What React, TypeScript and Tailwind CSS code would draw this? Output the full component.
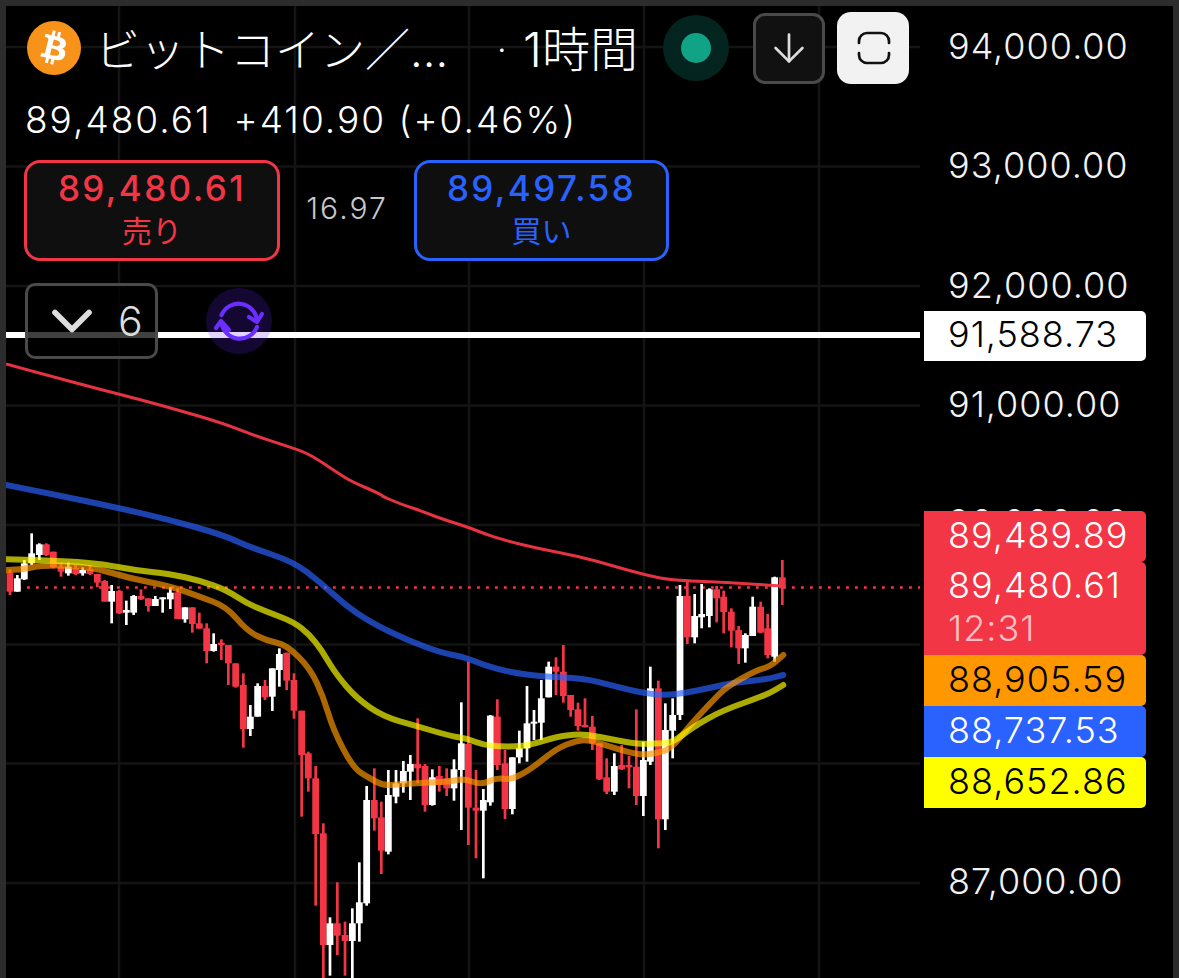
import { ArrowDown, ChevronDown } from "lucide-react"

type Candle = [number, number, number, number, number, 0 | 1]
type Pt = [number, number]

// candle rows: x, wick top, body top, body bottom, wick bottom, red?
// measured on 3x crops, so every group keeps its own origin
const left: Candle[] = [
  [30, 178, 188, 245, 255, 1], [52, 195, 205, 245, 245, 0], [73, 150, 160, 208, 210, 0], [95, 70, 130, 160, 165, 0],
  [118, 100, 103, 135, 150, 0], [139, 100, 103, 135, 138, 1], [160, 125, 125, 172, 175, 1], [183, 158, 170, 185, 200, 1],
  [205, 158, 170, 190, 197, 0], [227, 165, 175, 192, 195, 1], [248, 172, 180, 190, 197, 0], [270, 165, 178, 192, 195, 1],
  [292, 192, 192, 218, 232, 1], [314, 210, 213, 275, 275, 1], [335, 225, 243, 275, 340, 0], [358, 240, 243, 310, 312, 1],
  [379, 272, 300, 308, 345, 0], [401, 255, 258, 308, 315, 0], [423, 238, 258, 268, 270, 1], [445, 265, 265, 288, 305, 1],
  [466, 258, 267, 288, 288, 0], [488, 262, 262, 268, 308, 0], [511, 232, 248, 268, 297, 0], [533, 235, 247, 327, 327, 1],
  [555, 292, 292, 328, 338, 0], [577, 292, 292, 342, 368, 1], [598, 308, 340, 356, 356, 1], [620, 340, 355, 423, 460, 1],
  [641, 370, 402, 423, 425, 0], [664, 388, 398, 405, 450, 1], [685, 405, 405, 460, 525, 1], [707, 460, 460, 530, 533, 1],
  [730, 490, 525, 657, 713, 1], [751, 585, 620, 657, 678, 0], [773, 520, 528, 620, 620, 0], [795, 510, 528, 562, 570, 1],
  [817, 475, 475, 560, 603, 0], [838, 415, 432, 480, 530, 0], [860, 428, 428, 512, 540, 1],
]

const middle: Candle[] = [
  [12, 100, 120, 212, 236, 1], [35, 212, 212, 345, 530, 1], [55, 335, 340, 415, 455, 1], [77, 378, 415, 582, 797, 1],
  [100, 550, 580, 915, 1014, 1], [120, 832, 850, 915, 1007, 0], [142, 727, 850, 887, 945, 1], [165, 845, 885, 903, 1007, 1],
  [187, 805, 850, 903, 1014, 0], [208, 667, 787, 850, 905, 0], [230, 438, 480, 790, 797, 0], [253, 385, 480, 535, 572, 1],
  [274, 485, 532, 632, 702, 1], [295, 390, 465, 635, 643, 0], [318, 390, 430, 470, 490, 0], [340, 363, 393, 430, 458, 0],
  [361, 345, 372, 395, 480, 0], [383, 235, 372, 385, 430, 1], [405, 372, 378, 495, 515, 1], [427, 388, 412, 495, 497, 0],
  [448, 378, 408, 435, 455, 1], [470, 385, 415, 445, 468, 1], [492, 358, 388, 445, 482, 0], [514, 187, 310, 390, 570, 0],
  [535, 65, 312, 503, 615, 1], [558, 390, 503, 512, 655, 1], [580, 447, 480, 512, 715, 0], [601, 225, 227, 487, 497, 0],
  [622, 178, 230, 375, 390, 1], [645, 330, 370, 507, 537, 1], [667, 352, 352, 507, 523, 0], [688, 272, 325, 352, 370, 0],
  [711, 138, 250, 325, 365, 0], [732, 210, 245, 250, 300, 0], [754, 120, 175, 248, 300, 0], [776, 65, 80, 172, 172, 0],
  [798, 52, 80, 95, 165, 1], [820, 15, 95, 168, 188, 1], [842, 165, 165, 210, 230, 1], [864, 188, 208, 258, 272, 1],
  [885, 175, 255, 262, 262, 1],
]

const right: Candle[] = [
  [7, 528, 560, 610, 630, 1], [28, 610, 610, 718, 720, 1], [50, 655, 712, 755, 762, 1], [73, 640, 678, 755, 765, 0],
  [95, 615, 675, 688, 690, 1], [117, 648, 675, 682, 745, 1], [139, 508, 680, 768, 795, 1], [160, 605, 660, 768, 828, 0],
  [181, 380, 445, 665, 675, 0], [205, 422, 445, 838, 925, 1], [226, 490, 570, 838, 870, 0], [248, 475, 525, 572, 655, 0],
  [270, 135, 168, 525, 540, 0], [292, 125, 168, 292, 312, 1], [314, 162, 228, 292, 310, 0], [335, 132, 222, 232, 265, 0],
  [358, 145, 148, 228, 262, 0], [380, 138, 148, 175, 247, 1], [401, 152, 170, 216, 280, 1], [424, 205, 215, 272, 322, 1],
  [446, 258, 270, 325, 372, 1], [466, 280, 285, 325, 368, 0], [488, 170, 200, 288, 288, 0], [512, 185, 200, 278, 280, 1],
  [533, 222, 265, 345, 355, 1], [554, 110, 112, 350, 365, 0], [577, 60, 112, 145, 195, 1],
]

const crop = (ox: number, oy: number, pts: Pt[]): Pt[] => pts.map(([x, y]) => [ox + x / 3, oy + y / 3])

// rounds the corners by running quadratics through the midpoints
const toPath = (pts: Pt[]) => {
  let d = `M${pts[0][0].toFixed(1)} ${pts[0][1].toFixed(1)}`
  for (let i = 1; i < pts.length - 1; i++) {
    const mx = (pts[i][0] + pts[i + 1][0]) / 2
    const my = (pts[i][1] + pts[i + 1][1]) / 2
    d += ` Q${pts[i][0].toFixed(1)} ${pts[i][1].toFixed(1)} ${mx.toFixed(1)} ${my.toFixed(1)}`
  }
  const last = pts[pts.length - 1]
  return `${d} L${last[0].toFixed(1)} ${last[1].toFixed(1)}`
}

const redLine: Pt[] = [
  ...crop(0, 355, [[18, 27], [90, 47], [250, 90], [360, 118], [510, 158], [670, 205], [750, 237], [880, 280], [930, 298], [1010, 352], [1055, 380], [1130, 412], [1160, 430]]),
  ...crop(380, 480, [[0, 45], [60, 72], [130, 95], [180, 115], [260, 140], [310, 160], [370, 180], [480, 207], [600, 230], [700, 258], [790, 283], [870, 301], [1040, 307], [1206, 318]]),
]

const blueLine: Pt[] = [
  ...crop(0, 355, [[18, 390], [130, 412], [360, 460], [510, 495], [670, 540], [750, 577], [880, 620]]),
  [320, 582], [345, 605], [370, 622],
  ...crop(290, 640, [[350, 0], [460, 40], [520, 50], [580, 75], [660, 97], [760, 110], [880, 115]]),
  ...crop(590, 540, [[60, 435], [160, 460], [240, 467], [330, 450], [420, 430], [530, 418], [580, 405]]),
]

const orangeLine: Pt[] = [
  ...crop(0, 510, [[20, 180], [60, 180], [130, 165], [270, 170], [390, 205], [510, 228], [600, 260], [680, 290], [740, 362], [800, 392], [860, 405]]),
  ...crop(290, 640, [[60, 85], [100, 170], [130, 270], [190, 385], [240, 415], [280, 437], [340, 432], [420, 427], [480, 425], [520, 415], [575, 435], [620, 413], [660, 420], [720, 390], [800, 325], [860, 302]]),
  ...crop(590, 540, [[0, 600], [60, 620], [145, 645], [200, 640], [245, 625], [300, 555], [370, 480], [410, 440], [500, 390], [540, 380], [580, 345]]),
]

const oliveLine: Pt[] = [
  ...crop(0, 510, [[20, 148], [100, 150], [280, 158], [400, 180], [510, 192], [600, 212], [680, 240], [740, 280], [800, 305], [880, 335], [930, 375], [960, 415]]),
  ...crop(290, 640, [[100, 40], [140, 105], [200, 175], [280, 230], [380, 258], [480, 288], [530, 295], [580, 315], [640, 320], [710, 318], [800, 290], [860, 283]]),
  ...crop(590, 540, [[0, 585], [60, 597], [140, 612], [200, 610], [245, 610], [310, 560], [400, 510], [530, 465], [580, 435]]),
]

const gridY = [47, 166.5, 286, 405.5, 525, 644.5, 763.5, 883]
const gridX = [119, 295, 469, 644, 819]

// y of each label centre in the page
const axisLabels: [string, number][] = [
  ["94,000.00", 46],
  ["93,000.00", 165],
  ["92,000.00", 285],
  ["91,000.00", 404],
  ["90,000.00", 522],
  ["87,000.00", 881],
]

function CandleGroup({ ox, oy, rows }: { ox: number; oy: number; rows: Candle[] }) {
  return (
    <>
      {rows.map(([x, wt, bt, bb, wb, red]) => {
        const cx = ox + x / 3
        const fill = red ? "#f23645" : "#ffffff"
        return (
          <g key={x} fill={fill}>
            <rect x={cx - 1.35} y={oy + wt / 3} width={2.7} height={(wb - wt) / 3} />
            <rect x={cx - 3.4} y={oy + bt / 3} width={6.8} height={Math.max((bb - bt) / 3, 2)} />
          </g>
        )
      })}
    </>
  )
}

function Chart() {
  return (
    <svg className="absolute left-[-6px] top-[-6px]" width={1179} height={978} viewBox="0 0 1179 978" fill="none">
      {gridY.map((y) => (
        <line key={y} x1={6} x2={920} y1={y} y2={y} stroke="#141414" strokeWidth={2.5} />
      ))}
      {gridX.map((x) => (
        <line key={x} x1={x} x2={x} y1={6} y2={978} stroke="#141414" strokeWidth={2.5} />
      ))}
      <rect x={6} y={332} width={914} height={6} fill="#ffffff" />
      <line x1={18} x2={920} y1={587.5} y2={587.5} stroke="#f23645" strokeWidth={2.6} strokeDasharray="2.8 6.2" />
      <CandleGroup ox={0} oy={510} rows={left} />
      <CandleGroup ox={290} oy={640} rows={middle} />
      <CandleGroup ox={590} oy={540} rows={right} />
      <path d={toPath(blueLine)} stroke="#2962ff" strokeOpacity={0.68} strokeWidth={6} strokeLinecap="round" />
      <path d={toPath(orangeLine)} stroke="#ff9800" strokeOpacity={0.68} strokeWidth={6} strokeLinecap="round" />
      <path d={toPath(oliveLine)} stroke="#ffff00" strokeOpacity={0.67} strokeWidth={6} strokeLinecap="round" />
      <path d={toPath(redLine)} stroke="#f23645" strokeOpacity={0.95} strokeWidth={3} />
    </svg>
  )
}

function BitcoinLogo() {
  return (
    <svg width={54} height={54} viewBox="0 0 64 64" className="shrink-0">
      <circle cx={32} cy={32} r={32} fill="#f7931a" />
      <path
        fill="#ffffff"
        d="M46.1 27.44c.64-4.27-2.61-6.56-7.05-8.09l1.44-5.78-3.52-.88-1.4 5.62c-.93-.23-1.88-.45-2.82-.66l1.41-5.66-3.52-.88-1.44 5.77c-.77-.18-1.52-.35-2.25-.53l-4.85-1.21-.94 3.76s2.61.6 2.56.64c1.42.36 1.68 1.3 1.64 2.04l-1.64 6.58c.1.02.23.06.37.12l-.37-.09-2.3 9.22c-.17.43-.62 1.08-1.61.83.03.05-2.56-.64-2.56-.64l-1.75 4.03 4.58 1.14c.85.21 1.69.44 2.51.65l-1.46 5.84 3.52.88 1.44-5.78c.96.26 1.89.5 2.8.73l-1.44 5.75 3.52.88 1.46-5.83c6 1.14 10.52.68 12.42-4.75 1.53-4.37-.08-6.89-3.23-8.53 2.3-.53 4.03-2.04 4.49-5.17zM38.05 38.72c-1.09 4.37-8.43 2.01-10.81 1.41l1.93-7.75c2.38.59 10.01 1.77 8.88 6.34zm1.09-11.35c-.99 3.97-7.1 1.95-9.08 1.46l1.75-7.03c1.98.49 8.37 1.41 7.33 5.57z"
      />
    </svg>
  )
}

function SyncIcon() {
  return (
    <svg width={66} height={66} viewBox="-33 -33 66 66" fill="none" stroke="#6a2eff" strokeWidth={4.2} strokeLinecap="round" strokeLinejoin="round">
      <path d="M-17.5 -6 A 18.5 18.5 0 0 1 18 0" />
      <path d="M10 -4 L18 1 L23 -7" />
      <path d="M18 6 A 18.5 18.5 0 0 1 -17.5 2" />
      <path d="M-23 7 L-18 0 L-10 9" />
    </svg>
  )
}

function QuoteBox({ price, label, color }: { price: string; label: string; color: "red" | "blue" }) {
  const red = color === "red"
  return (
    <div
      className={`flex h-[101px] flex-col items-center rounded-[16px] border-[3px] bg-[#0f0f0f] pt-[4px] ${
        red ? "w-[256px] border-[#f23645] text-[#f23645]" : "w-[255px] border-[#2962ff] text-[#2962ff]"
      }`}
    >
      <span className="text-[35px] leading-[42px] font-medium tracking-[2.4px]">{price}</span>
      <span className="mt-[3px] text-[30px] leading-[38px]">{label}</span>
    </div>
  )
}

function Header() {
  return (
    <div className="absolute left-0 top-0 flex flex-col pl-[18px] pt-[6px]">
      <div className="flex h-[72px] items-center text-white">
        <div className="ml-[3px] w-[68px]">
          <BitcoinLogo />
        </div>
        <span className="mt-[4px] w-[390px] whitespace-nowrap text-[45px] leading-none font-light">ビットコイン／...</span>
        <span className="mt-[4px] flex w-[178px] items-center whitespace-nowrap text-[48px] leading-none font-light">
          <span className="ml-[12px] w-[26px] text-[34px]">·</span>1時間
        </span>
        <div className="flex h-[66px] w-[66px] items-center justify-center rounded-full bg-[#04241f]">
          <div className="h-[30px] w-[30px] rounded-full bg-[#11a386]" />
        </div>
        <button className="ml-[24px] flex h-[71px] w-[72px] items-center justify-center rounded-[12px] border-[3px] border-[#4a4a4a] bg-[#111111]">
          <ArrowDown size={46} strokeWidth={1.4} className="text-[#dddddd]" />
        </button>
        <button className="ml-[12px] flex h-[72px] w-[72px] items-center justify-center rounded-[14px] bg-[#f2f2f2]">
          <svg className="ml-[2px]" width={34} height={34} viewBox="0 0 34 34" fill="none" stroke="#111111" strokeWidth={2.7} strokeLinecap="round">
            <path d="M2 12 V10 A8 8 0 0 1 10 2 H24 A8 8 0 0 1 32 10 V12" />
            <path d="M2 22 V24 A8 8 0 0 0 10 32 H24 A8 8 0 0 0 32 24 V22" />
          </svg>
        </button>
      </div>
      <div className="mt-[15px] ml-[1px] flex h-[40px] items-center whitespace-nowrap text-[37px] leading-none font-[350] tracking-[2px] text-white">
        <span>89,480.61</span>
        <span className="ml-[22px]">+410.90 (+0.46%)</span>
      </div>
      <div className="mt-[21px] flex items-center">
        <QuoteBox price="89,480.61" label="売り" color="red" />
        <span className="mb-[4px] w-[134px] text-center text-[30px] font-[350] tracking-[2px] text-[#c8c8c8]">16.97</span>
        <QuoteBox price="89,497.58" label="買い" color="blue" />
      </div>
      <div className="mt-[22px] ml-[1px] flex items-center">
        <button className="flex h-[76px] w-[133px] items-center rounded-[10px] border-[3px] border-[#4a4a4a] bg-black/75 text-[#dddddd]">
          <ChevronDown size={68} strokeWidth={2} className="ml-[10px]" />
          <span className="ml-[12px] text-[41px] leading-none font-light">6</span>
        </button>
        <div className="ml-[48px] flex h-[66px] w-[66px] items-center justify-center rounded-full bg-[#6428ff]/20">
          <SyncIcon />
        </div>
      </div>
    </div>
  )
}

function PriceAxis() {
  return (
    <div className="absolute left-[918px] top-0 h-full w-[222px] text-[36px] leading-[40px] font-[350] tracking-[1px] text-[#f2f2f2]">
      {axisLabels.map(([label, y]) => (
        <span key={label} className="absolute left-[24px]" style={{ top: y - 26 }}>
          {label}
        </span>
      ))}
      <div className="absolute top-[305px] flex h-[50px] w-full items-center rounded-r-[5px] bg-white pb-[4px] pl-[24px] text-black">91,588.73</div>
      <div className="absolute top-[505px] flex w-full flex-col">
        <div className="flex h-[51px] items-center rounded-r-[5px] bg-[#f23645] pb-[4px] pl-[24px] text-white">89,489.89</div>
        <div className="flex h-[93px] flex-col rounded-r-[5px] bg-[#f23645] pl-[24px] pt-[3px] text-white">
          <span>89,480.61</span>
          <span className="mt-[3px] text-[#fbc0c6]">12:31</span>
        </div>
        <div className="flex h-[51px] items-center rounded-r-[5px] bg-[#ff9800] pb-[4px] pl-[24px] text-black">88,905.59</div>
        <div className="flex h-[51px] items-center rounded-r-[5px] bg-[#2962ff] pb-[4px] pl-[24px] text-white">88,737.53</div>
        <div className="flex h-[51px] items-center rounded-r-[5px] bg-[#ffff00] pb-[4px] pl-[24px] text-black">88,652.86</div>
      </div>
    </div>
  )
}

export default function App() {
  return (
    <div className="h-[978px] w-[1179px] overflow-hidden bg-[#2c2c2c] px-[6px] pt-[6px] font-[Inter,'Noto_Sans_CJK_JP',sans-serif]">
      <div className="relative h-full w-full overflow-hidden bg-black">
        <Chart />
        <PriceAxis />
        <Header />
      </div>
    </div>
  )
}
